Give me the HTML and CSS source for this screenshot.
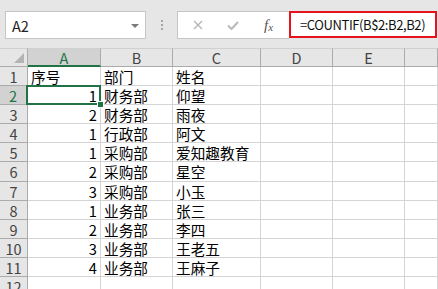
FILE: index.html
```html
<!DOCTYPE html>
<html lang="zh-CN">

<head>
  <meta charset="UTF-8">
  <title>COUNTIF</title>
  <link rel="stylesheet" href="styles.css">
</head>

<body>

  <div class="toolbar">
    <div class="namebox">
      <span>A2</span>
      <svg class="arrow" width="8" height="4" viewBox="0 0 8 4"><path d="M0 0H8L4 4Z" fill="#7a7a7a"/></svg>
    </div>
    <div class="dots"><i></i><i></i><i></i></div>
    <div class="fbtns">
      <svg width="10" height="10" viewBox="0 0 10 10"><path d="M1 1L9 9M9 1L1 9" stroke="#b4b4b4" stroke-width="1.3"/></svg>
      <svg width="12" height="9" viewBox="0 0 12 9"><path d="M1 4.5L4.5 8L11 1" stroke="#b9b9b9" stroke-width="2" fill="none"/></svg>
      <span class="fx">f<sub>x</sub></span>
    </div>
    <div class="formula">=COUNTIF(B$2:B2,B2)</div>
  </div>

  <div class="sheet" id="sheet"></div>

  <script>
    const rows = [
      ['序号', '部门', '姓名'],
      [1, '财务部', '仰望'],
      [2, '财务部', '雨夜'],
      [1, '行政部', '阿文'],
      [1, '采购部', '爱知趣教育'],
      [2, '采购部', '星空'],
      [3, '采购部', '小玉'],
      [1, '业务部', '张三'],
      [2, '业务部', '李四'],
      [3, '业务部', '王老五'],
      [4, '业务部', '王麻子'],
      ['', '', '']
    ];
    const cols = ['A', 'B', 'C', 'D', 'E', ''];

    let html = '<div class="corner"><span></span></div>';
    cols.forEach(c => {
      html += `<div class="colhead${c === 'A' ? ' sel' : ''}">${c}</div>`;
    });
    rows.forEach((r, i) => {
      const n = i + 1;
      html += `<div class="rowhead${n === 2 ? ' sel' : ''}">${n}</div>`;
      r.forEach((v, j) => {
        const num = typeof v === 'number';
        const active = n === 2 && j === 0 ? ' active' : '';
        html += `<div class="cell${num ? ' num' : ''}${active}">${v}</div>`;
      });
      html += '<div class="cell"></div><div class="cell"></div><div class="cell"></div>';
    });
    document.getElementById('sheet').innerHTML = html;
  </script>

</body>
</html>
```

FILE: styles.css
```css
body { margin: 0; background: #e6e6e6; width: 438px; height: 289px; overflow: hidden; font-family: "Noto Sans CJK SC", "Liberation Sans", sans-serif; color: #000; }

.toolbar { height: 48px; display: flex; align-items: flex-start; padding-top: 11px; box-sizing: border-box; }
.namebox { margin-left: 5px; width: 141px; height: 28px; box-sizing: border-box; border: 1px solid #c6c6c6; background: #fff; display: flex; align-items: center; justify-content: space-between; padding: 0 6px 0 6px; font-size: 14.5px; color: #222; }
.namebox .arrow { margin-top: 1px; }
.dots { width: 31px; height: 28px; display: flex; flex-direction: column; align-items: center; justify-content: center; gap: 2px; }
.dots i { width: 2px; height: 2px; background: #a6a6a6; }
.fbtns { width: 112px; height: 28px; box-sizing: border-box; border: 1px solid #c6c6c6; border-right: none; background: #fff; display: flex; align-items: center; padding-left: 15px; gap: 24px; }
.fx { font-family: "Liberation Serif", serif; font-style: italic; font-size: 15px; color: #555; margin-left: 1px; }
.fx sub { font-size: 11px; vertical-align: -1px; }
.formula { width: 148px; height: 27px; box-sizing: border-box; border: 2px solid #e5141b; background: #fff; font-size: 13px; letter-spacing: -0.4px; line-height: 23px; padding-left: 9px; white-space: nowrap; color: #111; }

.sheet { display: grid; grid-template-columns: 28px 73px 72px 88px 72px 72px 1fr; grid-template-rows: 19px repeat(12, 19.1px); width: 438px; background: #fff; }
.corner { background: #e6e6e6; border-right: 1px solid #ababab; border-bottom: 1px solid #ababab; position: relative; border-top: 1px solid #d0d0d0; }
.corner span { position: absolute; right: 3px; bottom: 3px; width: 0; height: 0; border-left: 10px solid transparent; border-bottom: 10px solid #b4b4b4; }
.colhead { background: #e6e6e6; border-top: 1px solid #d0d0d0; border-right: 1px solid #ababab; border-bottom: 1px solid #ababab; text-align: center; font-size: 14.5px; line-height: 18px; color: #444; }
.colhead.sel { background: #d2d2d2; color: #217346; border-bottom: 2px solid #217346; line-height: 17px; }
.rowhead { background: #e6e6e6; border-right: 1px solid #ababab; border-bottom: 1px solid #ababab; text-align: center; font-size: 14.5px; line-height: 19px; color: #444; }
.rowhead.sel { background: #d2d2d2; color: #217346; border-right: 2px solid #217346; }
.cell { border-right: 1px solid #d4d4d4; border-bottom: 1px solid #d4d4d4; font-size: 14.67px; line-height: 19px; padding: 0 3px; white-space: nowrap; }
.cell.num { text-align: right; }
.cell.active { position: relative; }
.cell.active::after { content: ""; position: absolute; left: -2px; top: -1px; right: -1px; bottom: -1px; border: 2px solid #217346; }
.cell.active::before { content: ""; position: absolute; right: -4px; bottom: -4px; width: 5px; height: 5px; background: #217346; border: 1px solid #fff; z-index: 1; }
```
